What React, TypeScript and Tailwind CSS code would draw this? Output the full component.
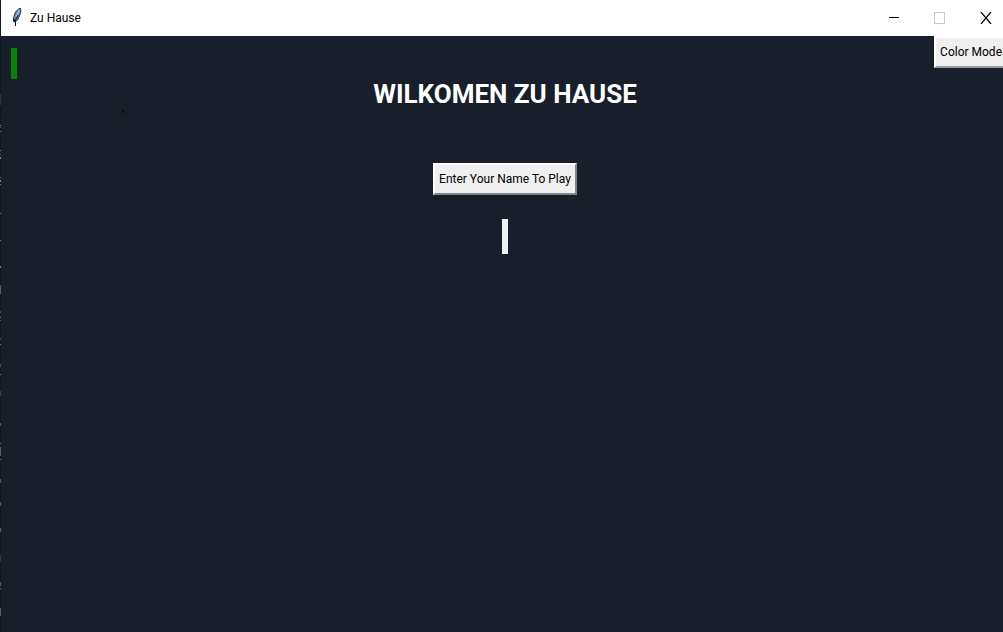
const edgeMarks = [
  { y: 94, h: 11, c: '#30383d' },
  { y: 125, h: 1, c: '#7d8386' },
  { y: 127, h: 1, c: '#596064' },
  { y: 131, h: 1, c: '#7d8386' },
  { y: 150, h: 1, c: '#7d8386' },
  { y: 154, h: 1, c: '#596064' },
  { y: 157, h: 2, c: '#7d8386' },
  { y: 177, h: 1, c: '#596064' },
  { y: 180, h: 2, c: '#7d8386' },
  { y: 184, h: 1, c: '#7d8386' },
  { y: 213, h: 1, c: '#7d8386' },
  { y: 240, h: 1, c: '#7d8386' },
  { y: 266, h: 2, c: '#7d8386' },
  { y: 285, h: 9, c: '#596064' },
  { y: 311, h: 2, c: '#484f53' },
  { y: 317, h: 1, c: '#7d8386' },
  { y: 320, h: 1, c: '#596064' },
  { y: 338, h: 2, c: '#484f53' },
  { y: 344, h: 1, c: '#7d8386' },
  { y: 364, h: 3, c: '#484f53' },
  { y: 374, h: 1, c: '#7d8386' },
  { y: 391, h: 5, c: '#3c4347' },
  { y: 423, h: 3, c: '#596064' },
  { y: 443, h: 1, c: '#7d8386' },
  { y: 447, h: 9, c: '#596064' },
  { y: 459, h: 1, c: '#7d8386' },
  { y: 479, h: 4, c: '#596064' },
  { y: 502, h: 4, c: '#596064' },
  { y: 528, h: 4, c: '#596064' },
  { y: 555, h: 7, c: '#30383d' },
  { y: 582, h: 4, c: '#596064' },
  { y: 588, h: 2, c: '#484f53' },
  { y: 608, h: 8, c: '#596064' },
];

function Feather() {
  return (
    <svg width="11" height="20" viewBox="0 0 11 20" aria-hidden="true">
      <path d="M9.5 0 L7 1.5 L4.5 4 L3 8 L2.5 12 L4 14 L6.5 12 L8.5 8 L9.8 3 Z" fill="#5f92c8" stroke="#26364a" strokeWidth="1" />
      <path d="M8.3 2 L5 9" stroke="#b9d9f5" strokeWidth="1" fill="none" />
      <path d="M7 7 L4.5 12 L4.5 18" stroke="#0c1118" strokeWidth="1" fill="none" />
      <path d="M2.5 11 L3.5 14" stroke="#0c1118" strokeWidth="1.6" fill="none" />
    </svg>
  );
}

function TitleBar() {
  return (
    <header className="flex h-9 items-center bg-white pl-[10px] text-black">
      <Feather />
      <span className="ml-2 flex-1 text-[12px] leading-5">Zu Hause</span>
      <button type="button" aria-label="Minimize" className="flex h-9 w-[46px] items-center justify-center">
        <svg width="12" height="12" viewBox="0 0 12 12" shapeRendering="crispEdges">
          <path d="M1 5.5H11" stroke="#000" />
        </svg>
      </button>
      <button type="button" aria-label="Maximize" disabled className="flex h-9 w-[46px] items-center justify-center">
        <svg width="12" height="12" viewBox="0 0 12 12" shapeRendering="crispEdges">
          <rect x="0.5" y="0.5" width="10" height="11" fill="none" stroke="#cbcbcb" />
        </svg>
      </button>
      <button type="button" aria-label="Close" className="flex h-9 w-[40px] items-center justify-end pr-[11px]">
        <svg width="12" height="12" viewBox="0 0 12 12">
          <path d="M1 0L11 12M11 0L1 12" stroke="#000" strokeWidth="1.2" />
        </svg>
      </button>
    </header>
  );
}

export default function App() {
  return (
    <div className="flex h-screen overflow-hidden bg-[#181f2a] font-['Roboto','Open_Sans',sans-serif]">
      <svg className="h-full w-px shrink-0 bg-[#10181b]" aria-hidden="true">
        {edgeMarks.map((m) => (
          <rect key={m.y} x="0" y={m.y} width="1" height={m.h} fill={m.c} />
        ))}
      </svg>
      <div className="flex min-w-0 flex-1 flex-col">
        <TitleBar />
        <main className="relative flex flex-1 flex-col items-center pt-10 pl-[6px]">
          <div className="absolute top-3 left-[10px] h-[31px] w-[6px] bg-[#078407]" />
          <div className="absolute top-[74px] left-[121px] h-[3px] w-[2px] bg-[#080c12]" />
          <button
            type="button"
            className="absolute top-0 right-0 h-8 border-t-2 border-b-2 border-l-2 border-t-white border-b-[#989898] border-l-white bg-[#efefef] pr-px pl-1 text-[12px] leading-5 whitespace-nowrap text-black"
          >
            Color Mode
          </button>
          <h1 className="text-[26px] leading-9 font-bold whitespace-nowrap text-white">
            WILKOMEN ZU HAUSE
          </h1>
          <label
            htmlFor="player-name"
            className="mt-[51px] flex h-8 items-center border-2 border-t-white border-r-[#858585] border-b-[#858585] border-l-white bg-[#efefef] px-1 text-[12px] leading-5 whitespace-nowrap text-black"
          >
            Enter Your Name To Play
          </label>
          <input
            id="player-name"
            type="text"
            className="mt-6 h-[35px] w-[6px] bg-[#eff2f5] outline-none"
          />
        </main>
      </div>
    </div>
  );
}
